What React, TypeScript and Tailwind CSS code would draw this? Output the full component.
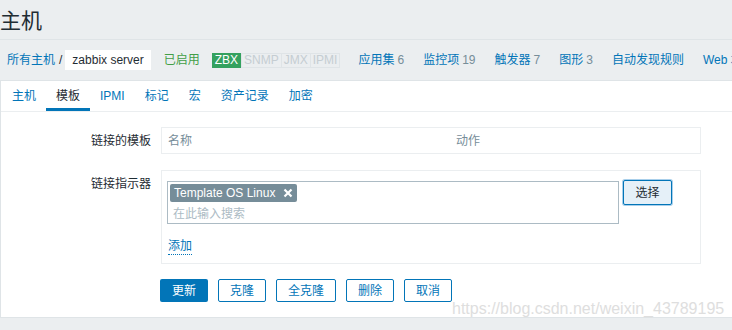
const font = { fontFamily: '"Liberation Sans", Arial, "Noto Sans CJK SC", sans-serif' };

const navItems = [
	{ label: "应用集", count: "6" },
	{ label: "监控项", count: "19" },
	{ label: "触发器", count: "7" },
	{ label: "图形", count: "3" },
	{ label: "自动发现规则", count: "" },
	{ label: "Web 场景", count: "" },
];

const tabs = ["主机", "模板", "IPMI", "标记", "宏", "资产记录", "加密"];

export default function App() {
	return (
		<div
			className="w-[732px] h-[330px] overflow-hidden bg-[#ebeef0] text-[#1f2c33] text-[12px]"
			style={font}
		>
			{/* title */}
			<div className="h-[40px] border-b border-[#dfe4e7] flex items-center">
				<h1 className="text-[21px] leading-none pt-[2px] whitespace-nowrap">主机</h1>
			</div>

			{/* breadcrumbs */}
			<div className="h-[40px] flex items-center pl-[7px] whitespace-nowrap">
				<a className="text-[#0275b8]">所有主机</a>
				<span className="ml-[4px] mr-[3px] text-[#1f2c33]">/</span>
				<span className="bg-white h-[20px] px-[7px] flex items-center text-[12px] mr-[13px]">
					zabbix server
				</span>
				<span className="text-[#429e47]">已启用</span>
				<div className="flex ml-[12px] h-[15px] text-[12px] leading-[13px]">
					<span className="bg-[#34a15f] text-white px-[2px] border border-[#34a15f]">ZBX</span>
					<span className="text-[#c5cdd2] border border-[#dfe4e7] px-[2px]">SNMP</span>
					<span className="text-[#c5cdd2] border border-l-0 border-[#dfe4e7] px-[2px]">JMX</span>
					<span className="text-[#c5cdd2] border border-l-0 border-[#dfe4e7] px-[2px]">IPMI</span>
				</div>
				<div className="flex gap-[19px] ml-[18px]">
					{navItems.map((n) => (
						<span key={n.label} className="whitespace-nowrap">
							<span className="text-[#0275b8]">{n.label}</span>
							{n.count && <span className="text-[#768d99] ml-[3px]">{n.count}</span>}
						</span>
					))}
				</div>
			</div>

			{/* panel */}
			<div className="h-[238px] bg-white border-l border-y border-[#dfe4e7]">
				<div className="h-[31px] flex pl-[1px] border-b border-[#ebeef0]">
					{tabs.map((t, i) => (
						<div
							key={t}
							className={
								i === 1
									? "px-[10px] flex items-center border-b-[3px] border-[#0275b8] pt-[3px] text-[#1f2c33] whitespace-nowrap"
									: "px-[10px] flex items-center text-[#0275b8] whitespace-nowrap"
							}
						>
							{t}
						</div>
					))}
				</div>

				<div className="pt-[15px]">
					{/* linked templates */}
					<div className="flex">
						<div className="w-[150px] text-right pt-[5px] whitespace-nowrap">链接的模板</div>
						<div className="ml-[10px] w-[540px] h-[27px] border border-[#ebeef0] flex items-center text-[#768d99]">
							<span className="pl-[6px] w-[294px]">名称</span>
							<span>动作</span>
						</div>
					</div>

					{/* link indicator */}
					<div className="flex mt-[16px]">
						<div className="w-[150px] text-right pt-[5px] whitespace-nowrap">链接指示器</div>
						<div className="ml-[10px] w-[540px] h-[94px] border border-[#ebeef0] pl-[5px] pt-[10px]">
							<div className="flex items-start">
								<div className="w-[452px] h-[43px] border border-[#acbbc4] pl-[2px] pt-[2px]">
									<span className="inline-flex items-center h-[18px] bg-[#768d99] text-white text-[12px] pl-[4px] pr-[4px] rounded-[2px] whitespace-nowrap">
										Template OS Linux
										<svg width="10" height="10" viewBox="0 0 10 10" className="ml-[8px]">
											<path d="M1.5 1.5 L8.5 8.5 M8.5 1.5 L1.5 8.5" stroke="white" strokeWidth="2.2" />
										</svg>
									</span>
									<div className="text-[#acbbc4] pl-[3px] pt-[2px] leading-[20px]">在此输入搜索</div>
								</div>
								<button className="ml-[4px] -mt-[1px] w-[49px] h-[25px] bg-[#e5f0f8] border border-[#0275b8] rounded-[2px] shadow-[0_0_0_1px_#a8cfeb] text-[#1f2c33] text-[12px]">
									选择
								</button>
							</div>
							<div className="mt-[13px] pl-[1px]">
								<span className="text-[#0275b8] border-b border-dotted border-[#0275b8] pb-[1px]">添加</span>
							</div>
						</div>
					</div>

					{/* buttons */}
					<div className="flex gap-[10px] ml-[159px] mt-[15px]">
						<button className="w-[48px] h-[23px] bg-[#0275b8] text-white rounded-[2px] text-[12px]">更新</button>
						<button className="w-[48px] h-[23px] border border-[#0275b8] text-[#0275b8] rounded-[2px] text-[12px]">克隆</button>
						<button className="w-[60px] h-[23px] border border-[#0275b8] text-[#0275b8] rounded-[2px] text-[12px]">全克隆</button>
						<button className="w-[48px] h-[23px] border border-[#0275b8] text-[#0275b8] rounded-[2px] text-[12px]">删除</button>
						<button className="w-[48px] h-[23px] border border-[#0275b8] text-[#0275b8] rounded-[2px] text-[12px]">取消</button>
					</div>
				</div>
			</div>

			{/* watermark */}
			<div className="relative">
				<span className="absolute left-[452px] -top-[21px] text-[16px] text-[#dedede] whitespace-nowrap">
					https://blog.csdn.net/weixin_43789195
				</span>
			</div>
		</div>
	);
}
